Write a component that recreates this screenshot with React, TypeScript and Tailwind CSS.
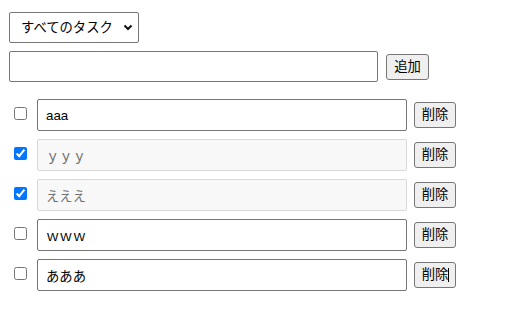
import { useState } from "react";

type Todo = { id: number; text: string; done: boolean };

const initial: Todo[] = [
  { id: 1, text: "aaa", done: false },
  { id: 2, text: "ｙｙｙ", done: true },
  { id: 3, text: "えええ", done: true },
  { id: 4, text: "ｗｗｗ", done: false },
  { id: 5, text: "あああ", done: false },
];

const font = "font-['Liberation_Sans','Noto_Sans_CJK_JP',sans-serif]";

export default function App() {
  const [todos, setTodos] = useState(initial);
  const [text, setText] = useState("");

  return (
    <div className={`min-h-screen bg-white pl-[9px] pt-[12px] text-[13.33px] text-black ${font}`}>
      <div className="relative h-[31px] w-[130px]">
        <select className="h-full w-full appearance-none rounded-[2px] border border-[#767676] bg-white pl-[11px] text-[13.33px] text-black">
          <option>すべてのタスク</option>
          <option>未完了</option>
          <option>完了</option>
        </select>
        <svg
          className="pointer-events-none absolute right-[6px] top-[12px]"
          width="10"
          height="7"
          viewBox="0 0 10 7"
        >
          <path d="M1.5 1.5 L5 5 L8.5 1.5" fill="none" stroke="#111" strokeWidth="2" />
        </svg>
      </div>

      <div className="mt-[8px] flex items-center gap-[8px]">
        <input
          value={text}
          onChange={(e) => setText(e.target.value)}
          className="h-[31px] w-[369px] rounded-[2px] border border-[#767676] px-[8px]"
        />
        <button className="h-[26px] w-[43px] rounded-[3px] border border-[#767676] bg-[#efefef] text-[13.33px]">
          追加
        </button>
      </div>

      <ul className="mt-[17px] flex flex-col gap-[8px]">
        {todos.map((t, i) => (
          <li key={t.id} className="flex items-center">
            <input
              type="checkbox"
              checked={t.done}
              onChange={() =>
                setTodos(todos.map((x) => (x.id === t.id ? { ...x, done: !x.done } : x)))
              }
              className="mb-[3px] ml-[5px] h-[13px] w-[13px] accent-[#0075ff]"
            />
            <input
              value={t.text}
              disabled={t.done}
              readOnly
              className={
                t.done
                  ? "ml-[10px] h-[32px] w-[370px] rounded-[2px] border border-[#d8d8d8] bg-[#f8f8f8] px-[8px] text-[#6d6d6d]"
                  : "ml-[10px] h-[32px] w-[370px] rounded-[2px] border border-[#767676] bg-white px-[8px] text-black"
              }
            />
            <button
              onClick={() => setTodos(todos.filter((x) => x.id !== t.id))}
              className="relative ml-[7px] h-[26px] w-[42px] rounded-[3px] border border-[#767676] bg-[#efefef] text-[13.33px]"
            >
              削除
              {i === todos.length - 1 && (
                <span className="absolute left-[33px] top-[5px] h-[14px] w-px bg-black" />
              )}
            </button>
          </li>
        ))}
      </ul>
    </div>
  );
}
